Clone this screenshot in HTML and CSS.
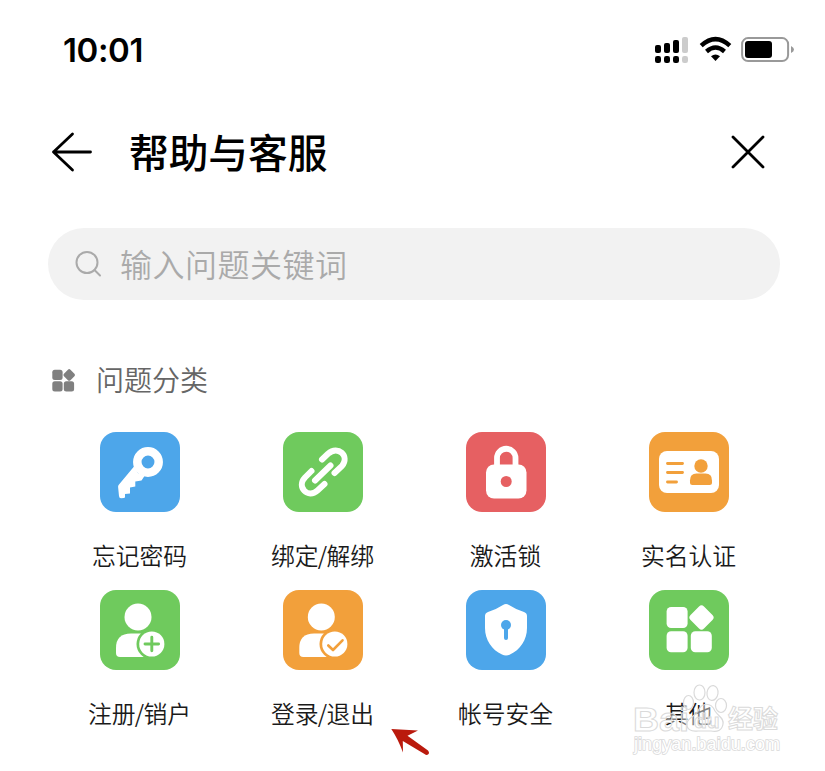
FILE: index.html
```html
<!DOCTYPE html>
<html lang="zh-CN">
<head>
<meta charset="utf-8">
<title>帮助与客服</title>
<link rel="stylesheet" href="styles.css">
</head>
<body>
<main class="screen">
  <div class="status">
    <span class="clock">10:01</span>
    <svg class="indicators" viewBox="0 0 142 30" width="142" height="30">
      <g transform="translate(0 2)">
        <rect x="2" y="8" width="6" height="8" rx="2"/><rect x="11" y="6" width="6" height="10" rx="2"/><rect x="20" y="3" width="6" height="13" rx="2"/><rect x="29" y="0" width="6" height="16" rx="2" fill="#ccc"/>
        <rect x="2" y="19" width="6" height="7" rx="2.2"/><rect x="11" y="19" width="6" height="7" rx="2.2"/><rect x="20" y="19" width="6" height="7" rx="2.2"/><rect x="29" y="19" width="6" height="7" rx="2.2" fill="#ccc"/>
      </g>
      <g fill="none" stroke="#000" stroke-width="4.4"><path d="M48.2 10.700Q62.500-2.500 76.800 10.700"/><path d="M53.500 16.500Q62.500 8.500 71.500 16.500"/></g>
      <path d="M58 21.300Q62.500 17.700 67 21.300L62.500 26Z"/>
      <rect x="89.100" y="3.100" width="46" height="23" rx="6" fill="#fff" stroke="#999" stroke-width="2"/>
      <rect x="92" y="6" width="27" height="17" rx="3"/>
      <path d="M138 11Q141 12.500 141 14.500T138 18Z" fill="#999"/>
    </svg>
  </div>
  <header class="titlebar">
    <svg class="back" viewBox="0 0 44 44" width="44" height="44"><path d="M23.500 4L4.500 22L23.500 40M4.500 22H41.500"/></svg>
    <h1>帮助与客服</h1>
    <svg class="close" viewBox="0 0 40 40" width="40" height="40"><path d="M5 5L35 35M35 5L5 35"/></svg>
  </header>
  <div class="search">
    <svg viewBox="0 0 30 30" width="30" height="30"><circle cx="13" cy="13.500" r="10.500"/><path d="M20.500 21L26 26.500"/></svg>
    <span>输入问题关键词</span>
  </div>
  <h2 class="section">
    <svg viewBox="0 0 24 24" width="24" height="24"><rect x="0.300" y="1.700" width="10.300" height="10.300" rx="2.500"/><rect x="0.300" y="13.200" width="10.300" height="10.300" rx="2.500"/><rect x="11.800" y="13.200" width="10.300" height="10.300" rx="2.500"/><rect x="12.600" y="2.300" width="9.200" height="9.200" rx="1.800" transform="rotate(45 17.200 6.900)"/></svg>
    <span>问题分类</span>
  </h2>
  <div class="categories">
    <div class="item"><svg class="tile blue" viewBox="0 0 80 80"><circle cx="48" cy="30" r="10.700" fill="none" stroke="#fff" stroke-width="8.500"/><path d="M34 34.500L18.600 53Q18 54 18.100 55L19 64Q19.200 66.200 21 66.200L24 66Q25 66 25 64.500V62L30 61.500V55.500L35.300 54.500V49.500L41.500 48.500L44.500 44L38 41Z"/></svg><span>忘记密码</span></div>
    <div class="item"><svg class="tile green" viewBox="0 0 80 80"><g fill="none" stroke="#fff" stroke-width="6" stroke-linecap="round"><path d="M39 27.500L45 21.800C55 13 67 24 59 34L51.500 41"/><path d="M32 48.500L47.500 33.500"/><path d="M28.500 39L22 45.500C13 55 25 67 34.500 58.500L41.500 52"/></g></svg><span>绑定<i>/</i>解绑</span></div>
    <div class="item"><svg class="tile red" viewBox="0 0 80 80"><path d="M31 36V26a9.200 9.200 0 0 1 18.500 0V36" fill="none" stroke="#fff" stroke-width="5.800"/><rect x="20" y="32.500" width="40.500" height="34" rx="8"/><circle cx="40.200" cy="49.500" r="5.500" fill="#e66062"/></svg><span>激活锁</span></div>
    <div class="item"><svg class="tile orange" viewBox="0 0 80 80"><rect x="10" y="19" width="60" height="42" rx="8"/><g fill="#f2a03b"><circle cx="52" cy="34" r="6.700"/><path d="M41 48.500Q41 41.500 47.500 41.500H56.500Q63 41.500 63 48.500V50.500Q63 53 60.500 53H43.500Q41 53 41 50.500Z"/></g><path d="M18.500 31.500H33.500M18.500 40.500H33.500M18.500 50H27.500" stroke="#f2a03b" stroke-width="2.900" stroke-linecap="round"/></svg><span>实名认证</span></div>
    <div class="item"><svg class="tile green" viewBox="0 0 80 80"><circle cx="38" cy="27" r="13.500"/><path d="M16 58Q16 43.500 31 43.500H46V67H20Q16 67 16 63Z"/><circle cx="51.800" cy="54" r="15.300" fill="#6fca5d"/><circle cx="51.800" cy="54" r="12.600"/><path d="M45 54H58.600M51.800 47.200V60.800" stroke="#6fca5d" stroke-width="2.900" stroke-linecap="round"/></svg><span>注册<i>/</i>销户</span></div>
    <div class="item"><svg class="tile orange" viewBox="0 0 80 80"><circle cx="38.300" cy="27" r="13.500"/><path d="M16.300 58Q16.300 43.500 31 43.500H46V67H20.300Q16.300 67 16.300 63Z"/><circle cx="51.800" cy="54" r="15.300" fill="#f2a03b"/><circle cx="51.800" cy="54" r="12.600"/><path d="M45.300 55.500L50 60L59.500 50.300" fill="none" stroke="#f2a03b" stroke-width="2.600" stroke-linecap="round" stroke-linejoin="round"/></svg><span>登录<i>/</i>退出</span></div>
    <div class="item"><svg class="tile blue" viewBox="0 0 80 80"><path d="M37 15Q40 13 43 15Q49 19 58 22Q61 23 61 26V38C61 50 54 60 44 64.500Q40 66.500 36 64.500C26 60 19 50 19 38V26Q19 23 22 22Q31 19 37 15Z"/><circle cx="40" cy="35" r="5" fill="#4da6ea"/><path d="M40 36V48" stroke="#4da6ea" stroke-width="4" stroke-linecap="round"/></svg><span>帐号安全</span></div>
    <div class="item"><svg class="tile green" viewBox="0 0 80 80"><rect x="17.600" y="17" width="21" height="21" rx="4.500"/><rect x="17.600" y="41.300" width="21" height="21" rx="4.500"/><rect x="41.800" y="41.300" width="21" height="21" rx="4.500"/><rect x="43" y="18" width="19" height="19" rx="3.500" transform="rotate(45 52.500 27.500)"/></svg><span>其他</span></div>
  </div>
  <svg class="pointer" viewBox="0 0 40 30" width="40" height="30"><path d="M1.300 2L28 3.500L17.500 8.700L38 23.500Q40 26 38 27.500Q36.500 28.500 34.500 27L12.800 14L13 25.500Q8 12 1.300 2Z"/></svg>
  <svg class="watermark" viewBox="0 0 160 80" width="160" height="80">
    <ellipse cx="67.500" cy="10.500" rx="5.500" ry="7.500"/><ellipse cx="80.500" cy="11" rx="5.500" ry="7.500" transform="rotate(8 80.500 11)"/><ellipse cx="56.500" cy="20.500" rx="5" ry="7"/><ellipse cx="89" cy="23.500" rx="5.500" ry="7"/>
    <path d="M66 29C70 20 79 20 83 29C87 35 92 36 91 42C90 49 85 50 79 49H66C59 50 54 47 55 41C56 35 63 35 66 29Z"/>
    <text class="wm-bai" x="1" y="49" textLength="56" lengthAdjust="spacingAndGlyphs">Bai</text><text class="wm-du" x="62" y="46">du</text><text class="wm-cn" x="96" y="46">经验</text><text class="wm-url" x="2" y="68" textLength="146">jingyan.baidu.com</text>
  </svg>
</main>
</body>
</html>
```
FILE: styles.css
```css
* { box-sizing: border-box; }
body { margin: 0; background: #fff; color: #000; font-family: "Noto Sans CJK SC", sans-serif; }
.screen { position: relative; width: 825px; height: 771px; overflow: hidden; }
.status { display: flex; justify-content: space-between; align-items: center; height: 100px; padding: 0 32px 0 63px; }
.clock { font: 600 33px/40px Inter, sans-serif; letter-spacing: -.4px; }
.indicators { margin-right: -2px; }
.titlebar { display: flex; align-items: center; height: 104px; padding: 0 57px 0 49px; }
.titlebar svg { fill: none; stroke: #000; stroke-width: 2.8; stroke-linecap: round; stroke-linejoin: round; }
h1 { margin: 0 auto 0 36px; padding-bottom: 3px; font-size: 39.7px; font-weight: 500; line-height: 60px; }
.search { display: flex; align-items: center; gap: 16px; width: 732px; height: 72px; margin: 24px 0 0 48px; padding-left: 26px; border-radius: 36px; background: #f2f2f2; color: #aaa; font-size: 32px; font-weight: 350; letter-spacing: .5px; }
.search svg { fill: none; stroke: #aaa; stroke-width: 2; stroke-linecap: round; }
.search span { padding-bottom: 3px; }
.section { display: flex; align-items: center; gap: 20px; height: 40px; margin: 60px 0 0 52px; color: #666; font-size: 28px; font-weight: 350; }
.section svg { fill: #808080; }
.section span { padding-bottom: 2px; }
.categories { display: grid; grid-template-columns: repeat(4, 183px); grid-auto-rows: 158px; margin: 32px 0 0 48.5px; }
.item { display: flex; flex-direction: column; align-items: center; gap: 25px; color: #1a1a1a; font-size: 23.8px; font-weight: 350; line-height: 36px; }
.item span { padding-right: 1px; }
.item i { font-style: normal; margin: 0 -.8px; }
.tile { width: 80px; height: 80px; border-radius: 16px; fill: #fff; }
.blue { background: #4da6ea; }
.green { background: #6fca5d; }
.red { background: #e66062; }
.orange { background: #f2a03b; }
.pointer { position: absolute; left: 390px; top: 727px; fill: #ba1a0d; }
.watermark { position: absolute; left: 632px; top: 682px; fill: rgba(255,255,255,.45); stroke: #dadada; stroke-width: 1.2; font-family: "Liberation Sans", "Noto Sans CJK SC", sans-serif; }
.watermark text { stroke-width: 1; fill: rgba(255,255,255,.45); font-weight: 700; }
.wm-bai { font-size: 34px; }
.wm-du { font-size: 21px; }
.watermark .wm-cn { font-family: "Noto Sans CJK SC", sans-serif; font-size: 25px; }
.watermark .wm-url { paint-order: stroke; stroke-width: 1.6; fill: #fff; font-size: 18px; font-weight: 400; }
```
